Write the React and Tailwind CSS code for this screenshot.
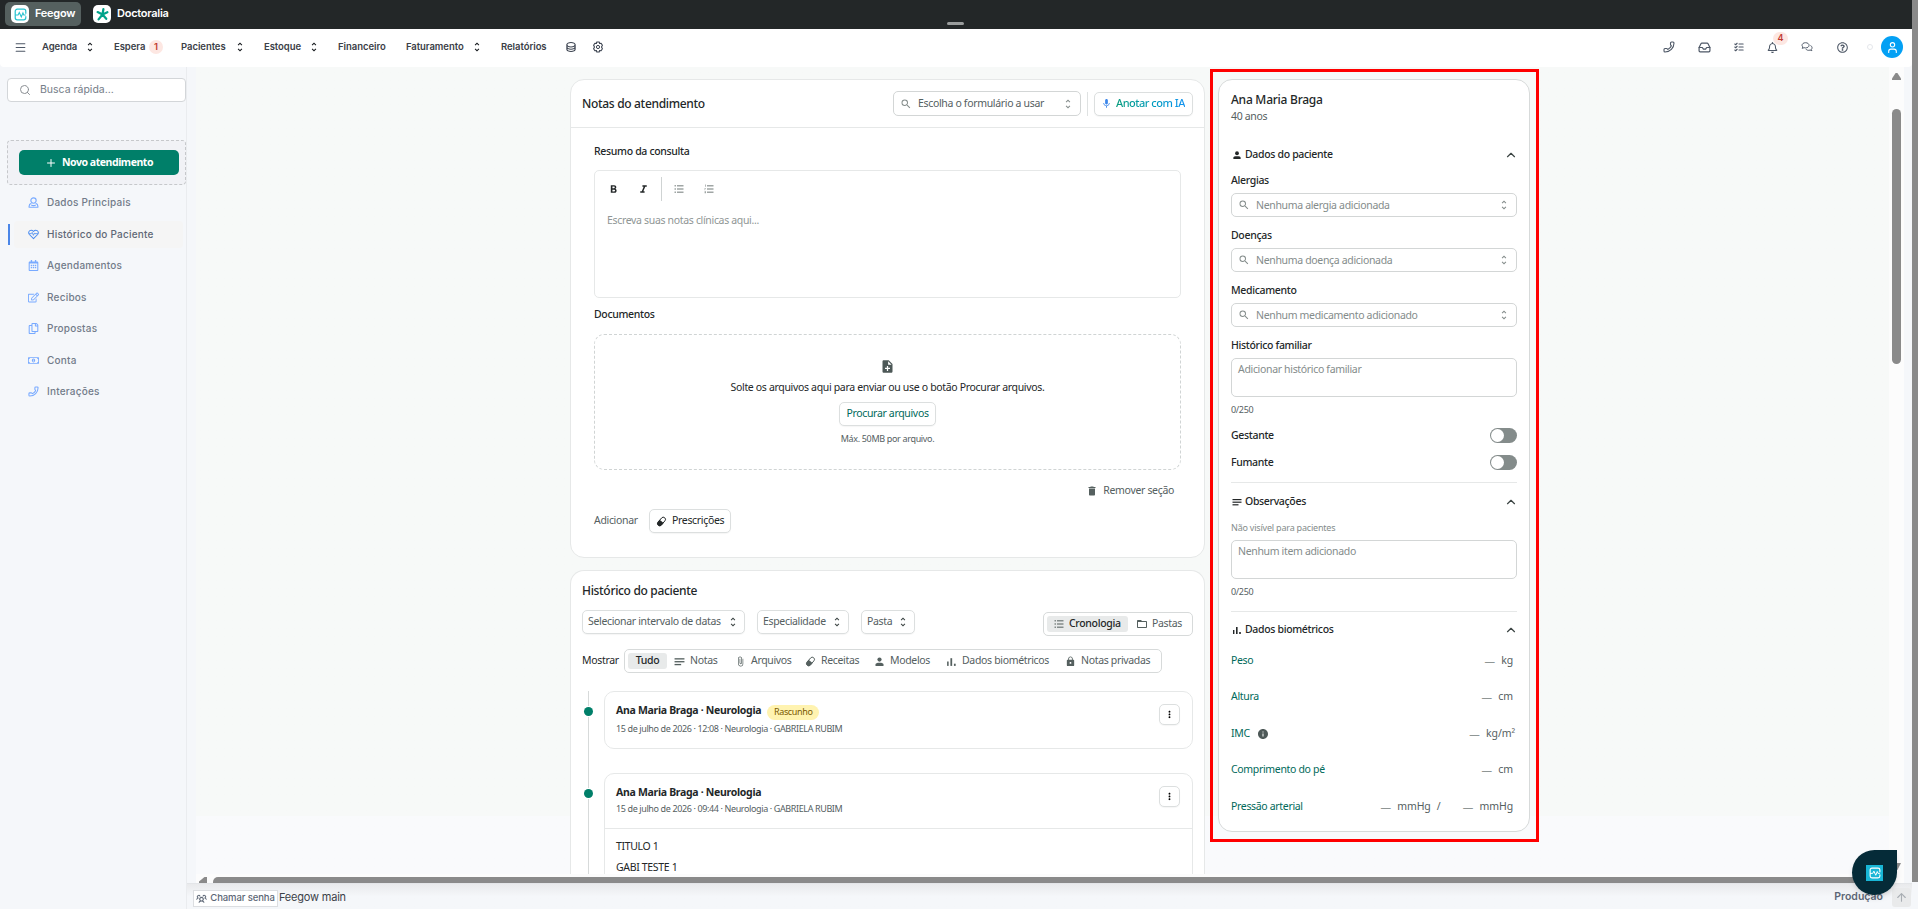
import React from "react";
import clsx from "clsx";
import {
  MdSearch,
  MdUnfoldMore,
  MdMic,
  MdFormatBold,
  MdFormatItalic,
  MdNoteAdd,
  MdDelete,
  MdAttachFile,
  MdLock,
  MdMoreVert,
  MdInfo,
  MdFolderOpen,
} from "react-icons/md";
import {
  FaRegCalendarAlt,
  FaRegEdit,
  FaRegCopy,
  FaRegMoneyBillAlt,
  FaRegBell,
  FaRegQuestionCircle,
} from "react-icons/fa";
import {
  PiDatabaseBold,
  PiListChecksBold,
  PiUsersThreeBold,
} from "react-icons/pi";
import { ChevronUp, Inbox, Menu, Phone, Plus, Search, User, ArrowUp } from "lucide-react";

const PersonIcon = ({ className }) => (
  <svg viewBox="0 0 11 11" className={className} fill="currentColor">
    <circle cx="5.5" cy="3.6" r="2.1" />
    <path d="M1.5 10V8.6C1.5 7.2 3 6.8 5.5 6.8S9.5 7.2 9.5 8.6V10z" />
  </svg>
);

const PillIcon = ({ className }) => (
  <svg viewBox="0 0 12 12" className={className}>
    <g transform="rotate(40 6 6)">
      <rect x="3.6" y="0.6" width="4.8" height="10.8" rx="2.4" fill="none" stroke="currentColor" strokeWidth="1" />
      <path d="M3.2 5.8h5.6v3a2.8 2.8 0 0 1-5.6 0z" fill="currentColor" />
    </g>
  </svg>
);

const BarsIcon = ({ className }) => (
  <svg viewBox="0 0 10 10" className={className} fill="currentColor">
    <rect x="1" y="5" width="1.4" height="4" />
    <rect x="4" y="2" width="1.6" height="7" />
    <rect x="7.2" y="7" width="1.6" height="2" />
  </svg>
);

const LinesIcon = ({ className }) => (
  <svg viewBox="0 0 10 10" className={className} fill="currentColor">
    <rect x="0.5" y="2" width="9" height="1.2" />
    <rect x="0.5" y="4.6" width="9" height="1.2" />
    <rect x="0.5" y="7.2" width="6" height="1.2" />
  </svg>
);

const ListIcon = ({ className, numbered }) => (
  <svg viewBox="0 0 10 10" className={className} fill="currentColor">
    <path d="M3 1h6.5v1.6H3zM3 4.2h6.5v1.6H3zM3 7.4h6.5V9H3z" />
    {numbered ? (
      <path d="M1 .6h.8v2.2H1zM.6 4h1.2v.8H1.2v1.4H.6zM.6 7.2h1.4v2H.6z" />
    ) : (
      <path d="M.5 1H2v1.6H.5zM.5 4.2H2v1.6H.5zM.5 7.4H2V9H.5z" />
    )}
  </svg>
);

const CogIcon = ({ className }) => (
  <svg viewBox="0 0 12 12" className={className} fill="none" stroke="currentColor" strokeLinejoin="round">
    <path d="M4.8 1h2.4l.4 1.5 1.5-.3 1.3 2L9.5 6l.9 1.8-1.3 2-1.5-.3L7.2 11H4.8l-.4-1.5-1.5.3-1.3-2L2.500 6l-.9-1.800 1.300-2 1.500.3z" strokeWidth="1.100" />
    <circle cx="6" cy="6" r="1.600" />
  </svg>
);

const ChatsIcon = ({ className }) => (
  <svg viewBox="0 0 14 12" className={className} fill="none" stroke="currentColor" strokeWidth="1.100" strokeLinejoin="round">
    <path d="M5.300 1C7.700 1 9.400 2.300 9.400 4S7.700 7.100 5.300 7.100c-.6 0-1.200-.1-1.700-.3L1.400 7.600l.8-1.700C1.500 5.400 1.200 4.700 1.200 4 1.200 2.300 2.900 1 5.300 1z" />
    <path d="M11 4.300c1.200.5 1.900 1.400 1.900 2.500 0 .8-.3 1.400-.9 1.900l.7 1.600-2.100-.7c-2 .7-4.200.1-5.100-1.400" />
  </svg>
);

const UserIcon = ({ className }) => (
  <svg viewBox="0 0 12 12" className={className} fill="none" stroke="currentColor" strokeWidth="1.200" strokeLinejoin="round">
    <circle cx="6" cy="3.900" r="2.900" />
    <path d="M3.700 6.800C2.100 7.400 1.200 8.600 1.200 10v1.100h9.600V10c0-1.400-.9-2.600-2.500-3.200M3.500 8.800c1.500.8 3.500.8 5 0" />
  </svg>
);

const HeartIcon = ({ className }) => (
  <svg viewBox="0 0 12 11" className={className} fill="none" stroke="currentColor" strokeWidth="1.100" strokeLinejoin="round">
    <path d="M6 10L1.500 5.500C.3 4 .6 2.200 2 1.300 3.300.6 4.900.9 6 2.200 7.100.9 8.700.6 10 1.300c1.400.9 1.700 2.700.5 4.200z" />
    <path d="M1.200 4.600h2.400l1-1.400 1.300 3.200 1.200-2.600.5.8h3.200" strokeWidth="0.900" />
  </svg>
);

const FeegowMark = ({ className }) => (
  <svg viewBox="0 0 16 16" className={className} fill="none" stroke="currentColor">
    <path d="M7 14.5H4A2.5 2.5 0 0 1 1.5 12V4A2.5 2.5 0 0 1 4 1.500h8A2.500 2.500 0 0 1 14.500 4v3M14.500 10v2a2.500 2.500 0 0 1-2.500 2.500H7" strokeWidth="1.500" />
    <path d="M1.500 8.500H5l1.500-3 2.500 5.500 2-5 1 2.500h2.500" strokeWidth="1.300" />
  </svg>
);

const DoctoraliaMark = ({ className }) => (
  <svg viewBox="0 0 16 16" className={className} fill="none" stroke="#00a28a" strokeWidth="2.4" strokeLinecap="round">
    <path d="M9 2.200L8 8M2.800 5.400L8 8M8 8l-4.200 5.200M8 8l4 4.600M8 8l5.200-2.400" />
  </svg>
);

const UpDown = ({ className }) => (
  <MdUnfoldMore className={clsx("size-3 shrink-0", className)} />
);

const NavItem = ({ label, className, sort }) => (
  <div className={clsx("flex items-center justify-between", className)}>
    <span>{label}</span>
    {sort && <UpDown className="text-[#15181c]" />}
  </div>
);

const TopBar = () => (
  <div className="h-[29px] bg-[#232728] flex items-center text-white text-[11px] font-semibold tracking-[-0.25px]">
    <div className="ml-[5px] mb-px h-6 w-[76px] rounded-[5px] bg-[#55605f] flex items-center pl-[6px]">
      <span className="size-[18px] rounded-[5px] bg-white flex items-center justify-center">
        <FeegowMark className="size-[13px] text-[#27c3cf]" />
      </span>
      <span className="ml-[6px] mb-px">Feegow</span>
    </div>
    <span className="ml-[12px] mb-px size-[18px] rounded-[5px] bg-white flex items-center justify-center">
      <DoctoraliaMark className="size-[15px]" />
    </span>
    <span className="ml-[6px] mb-[2px]">Doctoralia</span>
  </div>
);

const Header = () => (
  <div className="h-[38px] bg-white rounded-b-[4px] pb-[2px] flex items-center text-[9.5px] font-semibold tracking-[-0.05px] text-[#3b4047]">
    <Menu className="ml-[14px] size-[13px] text-[#4d5766]" />
    <NavItem label="Agenda" sort className="ml-[15px] w-[54px]" />
    <div className="ml-[18px] w-[32px]">Espera</div>
    <span className="ml-[3px] size-[14px] rounded-full bg-[#fde7e2] text-[#c0392f] flex items-center justify-center">
      1
    </span>
    <NavItem label="Pacientes" sort className="ml-[18px] w-[65px]" />
    <NavItem label="Estoque" sort className="ml-[18px] w-[56px]" />
    <div className="ml-[18px] w-[68px]">Financeiro</div>
    <NavItem label="Faturamento" sort className="w-[77px]" />
    <div className="ml-[18px] w-[64px]">Relatórios</div>
    <PiDatabaseBold className="size-3 text-[#3d4451]" />
    <CogIcon className="ml-[15px] size-3 text-[#3d4451]" />
    <div className="ml-auto mr-[9px] flex items-center text-[#4d5766]">
      <Phone className="size-3 -scale-x-100" strokeWidth={2.200} />
      <Inbox className="ml-[23px] size-[13px]" strokeWidth={2.200} />
      <PiListChecksBold className="ml-[22px] size-3" />
      <div className="relative ml-[22px]">
        <FaRegBell className="size-[11px]" />
        <span className="absolute -top-[10px] left-[6px] h-[13px] w-[15px] rounded-full bg-[#fde7e2] text-[9px] text-[#c0392f] flex items-center justify-center">
          4
        </span>
      </div>
      <ChatsIcon className="ml-[23px] size-3" />
      <FaRegQuestionCircle className="ml-[24px] size-[11px]" />
      <span className="ml-[19px] size-[6px] rounded-full border border-gray-200" />
      <span className="ml-[8px] size-[22px] rounded-full bg-[#03a0f4] text-white flex items-center justify-center">
        <User className="size-[13px]" />
      </span>
    </div>
  </div>
);

const PhoneIcon = ({ className }) => <Phone className={clsx("-scale-x-100", className)} strokeWidth={2.300} />;

const MENU = [
  { label: "Dados Principais", icon: UserIcon },
  { label: "Histórico do Paciente", icon: HeartIcon, active: true },
  { label: "Agendamentos", icon: FaRegCalendarAlt },
  { label: "Recibos", icon: FaRegEdit },
  { label: "Propostas", icon: FaRegCopy },
  { label: "Conta", icon: FaRegMoneyBillAlt },
  { label: "Interações", icon: PhoneIcon },
];

const Sidebar = () => (
  <div className="w-[187px] shrink-0 border-r border-[#eaecef] bg-[#f5f7fa]">
    <div className="ml-[7px] mt-[11px] h-6 w-[179px] rounded-[4px] border border-[#d3d6d9] bg-white flex items-center text-[10.5px] text-[#757d88]">
      <Search className="ml-[11px] size-3 text-[#8b8f94]" strokeWidth={2} />
      <span className="ml-[9px] mb-px">Busca rápida...</span>
    </div>
    <div className="ml-[7px] mt-[38px] h-[45px] w-[179px] rounded-[4px] border border-dashed border-[#c6c8cb] bg-[#f1f2f6] pl-[11px] pt-[9px]">
      <button className="h-[25px] w-[160px] rounded-[5px] bg-[#007f69] flex items-center justify-center text-white font-['Noto_Sans'] text-[10.5px] font-bold tracking-[-0.45px]">
        <Plus className="mr-[5px] size-3" />
        Novo atendimento
      </button>
    </div>
    <div className="mt-[2px]">
      {MENU.map(({ label, icon: Icon, active }) => (
        <div key={label} className="h-[31.5px] flex items-center text-[10px] tracking-[0.22px] font-medium text-[#727b89]">
          <span className={clsx("ml-[8px] h-[21px] w-[2px]", active && "bg-[#4a86e8]")} />
          <div className={clsx("ml-1 h-[27px] w-[169px] rounded-[4px] flex items-center", active && "bg-[#f5f5f5] text-[#5f6875]")}>
            <span className="ml-[13px] w-[12px] flex justify-center">
              <Icon className={clsx("size-[11px] shrink-0", active ? "text-[#4a8cf0]" : "text-[#78aaff]")} />
            </span>
            <span className="ml-[8px]">{label}</span>
          </div>
        </div>
      ))}
    </div>
  </div>
);

const OutlineButton = ({ className, children }) => (
  <button className={clsx("h-6 shrink-0 rounded-[5px] border border-[#dcdfdf] bg-white shadow-[0_1px_1px_rgba(0,0,0,0.04)] flex items-center", className)}>
    {children}
  </button>
);

const NotesCard = () => (
  <div className="h-[479px] w-[635px] rounded-[14px] border border-[#e6e8e8] bg-white">
    <div className="h-[48px] border-b border-[#e6e8e8] flex items-center pl-[11px] pr-[11px]">
      <h2 className="text-[12px] font-medium tracking-[-0.32px] text-[#232728]">Notas do atendimento</h2>
      <div className="ml-auto h-[25px] w-[188px] rounded-[5px] border border-[#d3d6d6] flex items-center text-[#55605f]">
        <MdSearch className="ml-[6px] size-3 text-[#848c8b]" />
        <span className="ml-[6px]">Escolha o formulário a usar</span>
        <UpDown className="ml-auto mr-[6px] text-[#848c8b]" />
      </div>
      <span className="ml-[6px] h-6 w-px bg-[#dfe2e2]" />
      <OutlineButton className="ml-[6px] w-[99px] pl-[6px]">
        <MdMic className="size-[11px] text-[#3b86ea]" />
        <span className="ml-[4px] bg-linear-to-r from-[#0b9c7d] to-[#1493f0] bg-clip-text text-[11px] font-medium tracking-[-0.5px] text-transparent">
          Anotar com IA
        </span>
      </OutlineButton>
    </div>

    <div className="px-[23px] pt-[15px] text-[#232728]">
      <div className="h-4 font-medium leading-4">Resumo da consulta</div>
      <div className="mt-[11px] h-[128px] w-[587px] rounded-[5px] border border-[#e6e8e8]">
        <div className="mt-[6px] h-6 flex items-center">
          <MdFormatBold className="ml-[12px] size-[13px]" />
          <MdFormatItalic className="ml-[17px] size-[13px]" />
          <span className="ml-[11px] h-6 w-px bg-[#cfd3d3]" />
          <ListIcon className="ml-[12px] size-[10px] text-[#a0a6a5]" />
          <ListIcon className="ml-[20px] size-[10px] text-[#a0a6a5]" numbered />
        </div>
        <div className="ml-[12px] mt-[11px] leading-4 text-[#8f9695]">Escreva suas notas clínicas aqui...</div>
      </div>
      <div className="mt-[8px] h-4 font-medium leading-4">Documentos</div>
      <div className="mt-[12px] h-[136px] w-[587px] rounded-[10px] border border-dashed border-[#d0d4d4] flex flex-col items-center">
        <MdNoteAdd className="mt-[24px] size-[15px] text-[#4d5857]" />
        <span className="mt-[5px] leading-4">Solte os arquivos aqui para enviar ou use o botão Procurar arquivos.</span>
        <OutlineButton className="mt-[7px] w-[97px] justify-center text-[#00695a]">Procurar arquivos</OutlineButton>
        <span className="mt-[5px] text-[9px] leading-4 text-[#55605f]">Máx. 50MB por arquivo.</span>
      </div>
      <div className="mt-[13px] h-4 pr-[7px] flex items-center justify-end text-[#55605f]">
        <MdDelete className="size-[12px]" />
        <span className="ml-[5px]">Remover seção</span>
      </div>
      <div className="mt-[10px] flex items-center">
        <span className="w-[55px] text-[#55605f]">Adicionar</span>
        <OutlineButton className="w-[82px] pl-[6px]">
          <PillIcon className="size-[11px]" />
          <span className="ml-[5px]">Prescrições</span>
        </OutlineButton>
      </div>
    </div>
  </div>
);

const FILTERS = [
  { label: "Notas", icon: LinesIcon, width: "w-[61px]" },
  { label: "Arquivos", icon: MdAttachFile, width: "w-[70px]" },
  { label: "Receitas", icon: PillIcon, width: "w-[69px]" },
  { label: "Modelos", icon: PersonIcon, width: "w-[72px]" },
  { label: "Dados biométricos", icon: BarsIcon, width: "w-[119px]" },
  { label: "Notas privadas", icon: MdLock, width: "w-[90px]" },
];

const Dropdown = ({ label, className }) => (
  <OutlineButton className={clsx("justify-between pl-[5px] pr-[5px] text-[#55605f]", className)}>
    {label}
    <UpDown className="text-[#3b4443]" />
  </OutlineButton>
);

const Entry = ({ date, draft, className, children }) => (
  <div className={clsx("flex", className)}>
    <div className="ml-[12px] w-[10px] shrink-0 flex flex-col items-center">
      <span className="h-[15px] w-px bg-[#d7dada]" />
      <span className="my-px size-[9px] rounded-full bg-[#007f69]" />
      <span className="w-px flex-1 bg-[#d7dada]" />
    </div>
    <div className={clsx("ml-[11px] w-[589px] border border-[#e6e8e8]", draft ? "h-[58px] rounded-[10px]" : "rounded-t-[10px]")}>
      <div className="h-[54px] pl-[11px] pr-[12px] flex">
        <div className="pt-[11px]">
          <div className="h-4 flex items-center">
            <span className="font-bold tracking-[-0.3px] text-[#232728]">Ana Maria Braga · Neurologia</span>
            {draft && (
              <span className="ml-[6px] mt-[2px] h-[15px] w-[52px] rounded-full bg-[#fff3b0] flex items-center justify-center text-[9px] text-[#7a5a00]">
                Rascunho
              </span>
            )}
          </div>
          <div className={clsx("text-[9px] leading-4 tracking-[-0.38px] text-[#55605f]", draft && "mt-[2px]")}>
            15 de julho de 2026 · {date} · Neurologia · GABRIELA RUBIM
          </div>
        </div>
        <OutlineButton className="ml-auto mt-[12px] h-[21px]! w-[21px] justify-center">
          <MdMoreVert className="size-[11px]" />
        </OutlineButton>
      </div>
      {children}
    </div>
  </div>
);

const HistoryCard = () => (
  <div className="mt-[12px] h-[304px] w-[635px] overflow-hidden rounded-t-[14px] border border-b-0 border-[#e6e8e8] bg-white">
    <h2 className="ml-[11px] mt-[12px] h-4 text-[12px] font-medium leading-4 tracking-[-0.32px] text-[#232728]">Histórico do paciente</h2>
    <div className="ml-[11px] mr-[11px] mt-[11px] h-[26px] flex">
      <Dropdown label="Selecionar intervalo de datas" className="w-[163px]" />
      <Dropdown label="Especialidade" className="ml-[12px] w-[92px]" />
      <Dropdown label="Pasta" className="ml-[12px] w-[54px]" />
      <div className="ml-auto mt-[2px] h-6 w-[150px] rounded-[5px] border border-[#d7dada] flex items-center pl-[3px] text-[#55605f]">
        <div className="h-4 w-[81px] rounded-[3px] bg-[#e8eaea] flex items-center pl-[7px] text-[#232728]">
          <ListIcon className="size-[10px] text-[#848c8b]" />
          <span className="ml-[5px] font-medium">Cronologia</span>
        </div>
        <MdFolderOpen className="ml-[8px] size-[12px]" />
        <span className="ml-[4px]">Pastas</span>
      </div>
    </div>
    <div className="ml-[11px] mt-[13px] h-6 flex items-center">
      <span className="w-[42px] text-[#232728]">Mostrar</span>
      <div className="h-6 w-[538px] rounded-[5px] border border-[#d7dada] flex items-center text-[#55605f]">
        <span className="ml-[3px] mr-[7px] h-4 w-[39px] rounded-[3px] bg-[#e8eaea] flex items-center justify-center font-medium text-[#232728]">Tudo</span>
        {FILTERS.map(({ label, icon: Icon, width }) => (
          <div key={label} className={clsx("shrink-0 flex items-center whitespace-nowrap", width)}>
            <Icon className="mr-[5px] size-[11px] shrink-0" />
            {label}
          </div>
        ))}
      </div>
    </div>
    <Entry date="12:08" draft className="mt-[18px] h-[82px]" />
    <Entry date="09:44" className="h-[110px]">
      <div className="border-t border-[#e6e8e8] pl-[11px] pt-[9px] text-[#232728]">
        <div className="h-4 leading-4">TITULO 1</div>
        <div className="mt-[5px] h-4 leading-4">GABI TESTE 1</div>
      </div>
    </Entry>
  </div>
);

const SectionTitle = ({ icon: Icon, children, className }) => (
  <div className={clsx("h-6 flex items-center text-[10.5px] font-medium text-[#232728]", className)}>
    <span className="w-[14px] pl-px">
      <Icon className="size-[10px]" />
    </span>
    {children}
    <ChevronUp className="ml-auto -mr-px size-[14px] text-[#3b4443]" strokeWidth={2} />
  </div>
);

const SearchField = ({ label, placeholder, className }) => (
  <div className={className}>
    <div className="h-[17px] font-medium leading-[17px] text-[#232728]">{label}</div>
    <div className="mt-[4px] h-6 rounded-[5px] border border-[#d3d6d6] flex items-center text-[#848c8b]">
      <MdSearch className="ml-[6px] size-3" />
      <span className="ml-[6px] mt-px">{placeholder}</span>
      <UpDown className="ml-auto mr-[6px]" />
    </div>
  </div>
);

const TextArea = ({ children, className }) => (
  <div className={clsx("h-[39px] rounded-[5px] border border-[#d3d6d6] pl-[6px] pt-[2px] leading-4 text-[#848c8b]", className)}>
    {children}
  </div>
);

const Toggle = ({ label, className }) => (
  <div className={clsx("h-[17px] flex items-center justify-between font-medium text-[#232728]", className)}>
    {label}
    <span className="h-[15px] w-[27px] rounded-full bg-[#848c8b] p-px">
      <span className="block size-[13px] rounded-full bg-white" />
    </span>
  </div>
);

const Dash = () => <span className="mr-[6px] mt-[2px] w-[11px] text-center text-[#8f9695] tracking-normal">—</span>;

const Metric = ({ label, unit, info }) => (
  <div className="h-[36.5px] pt-px flex items-center text-[#00695a]">
    {label}
    {info && <MdInfo className="ml-[7px] mt-px size-3 text-[#4d5857]" />}
    <div className={clsx("ml-auto flex items-center tracking-[-0.1px] text-[#55605f]", info ? "mr-[2px]" : "mr-[4px]")}>
      {label === "Pressão arterial" && (
        <>
          <Dash />
          <span className="mr-[6px]">mmHg</span>
          <span className="mr-[22px]">/</span>
        </>
      )}
      <Dash />
      {unit}
    </div>
  </div>
);

const PatientPanel = () => (
  <div className="ml-[5px] mt-[2px] h-[773px] w-[329px] border-3 border-[#ff0000] pl-[5px] pt-[7px]">
    <div className="h-[753px] w-[312px] rounded-[14px] border border-[#d7dada] bg-white px-[12px] pt-[12px]">
      <div className="h-4 text-[12px] font-medium leading-4 tracking-[-0.25px] text-[#232728]">Ana Maria Braga</div>
      <div className="h-[17px] leading-[17px] text-[#55605f]">40 anos</div>
      <SectionTitle icon={PersonIcon} className="mt-[18px]">Dados do paciente</SectionTitle>
      <SearchField label="Alergias" placeholder="Nenhuma alergia adicionada" className="mt-[5px]" />
      <SearchField label="Doenças" placeholder="Nenhuma doença adicionada" className="mt-[10px]" />
      <SearchField label="Medicamento" placeholder="Nenhum medicamento adicionado" className="mt-[10px]" />
      <div className="mt-[10px] h-[17px] font-medium leading-[17px] text-[#232728]">Histórico familiar</div>
      <TextArea className="mt-[4px]">Adicionar histórico familiar</TextArea>
      <div className="mt-[5px] h-4 text-[9px] leading-4 text-[#55605f]">0/250</div>
      <Toggle label="Gestante" className="mt-[9px]" />
      <Toggle label="Fumante" className="mt-[10px]" />
      <div className="mt-[11px] h-px bg-[#e6e8e8]" />
      <SectionTitle icon={LinesIcon} className="mt-[7px]">Observações</SectionTitle>
      <div className="mt-[6px] h-4 text-[9px] leading-4 tracking-[-0.2px] text-[#848c8b]">Não visível para pacientes</div>
      <TextArea className="mt-[4px]">Nenhum item adicionado</TextArea>
      <div className="mt-[5px] h-4 text-[9px] leading-4 text-[#55605f]">0/250</div>
      <div className="mt-[11px] h-px bg-[#e6e8e8]" />
      <SectionTitle icon={BarsIcon} className="mt-[6px]">Dados biométricos</SectionTitle>
      <Metric label="Peso" unit="kg" />
      <Metric label="Altura" unit="cm" />
      <Metric label="IMC" unit="kg/m²" info />
      <Metric label="Comprimento do pé" unit="cm" />
      <Metric label="Pressão arterial" unit="mmHg" />
    </div>
  </div>
);

const Footer = () => (
  <div className="h-[26px] w-full flex">
    <div className="w-[187px] border-r border-[#eaecef] bg-[#f5f7fa]" />
    <div className="flex-1 border-t border-[#e3e5e8] bg-linear-to-b from-[#e9eaec] to-[#f5f7fa] to-50% flex items-start text-[#5c6675]">
      <div className="ml-[6px] mt-[6px] h-[17px] w-[85px] border border-[#dcdee1] bg-white flex items-center justify-center text-[9.5px] font-medium tracking-[-0.1px]">
        <PiUsersThreeBold className="mr-[3px] size-[11px]" />
        Chamar senha
      </div>
      <span className="ml-[1px] mt-[5px] text-[11px] leading-4 tracking-[-0.2px] text-[#3b4148]">Feegow main</span>
      <span className="ml-auto mr-[9px] mt-[5px] text-[10.5px] font-semibold leading-4">Produção</span>
      <span className="mt-[4px] mr-px size-[19px] rounded-[3px] bg-[#e9eaeb] flex items-center justify-center text-[#a8adb3]">
        <ArrowUp className="size-[13px]" />
      </span>
    </div>
  </div>
);

export default function App() {
  return (
    <div className="relative h-[909px] w-[1918px] overflow-hidden bg-[#f5f7fa] flex font-[Inter,sans-serif]">
      <div className="w-[1912px] flex flex-col">
        <TopBar />
        <Header />
        <div className="h-[816px] flex">
          <Sidebar />
          <div className="ml-[9px] w-[1693px] flex flex-col">
            <div className="h-[807px] overflow-hidden bg-linear-to-b from-[#f7f9f8] from-[749px] to-[#f9fafc] to-[749px] pl-[374px] flex items-start font-['Noto_Sans',sans-serif] text-[10.5px] tracking-[-0.33px]">
              <div className="pt-[12px]">
                <NotesCard />
                <HistoryCard />
              </div>
              <PatientPanel />
            </div>
            <div className="h-[9px] bg-[#fcfcfc] flex items-end overflow-hidden">
              <svg viewBox="0 0 8 6" className="ml-[3px] h-[6px] w-2 fill-[#8a8a8a]">
                <path d="M8 0v6H0V4.500L5.500 0z" />
              </svg>
              <span className="ml-[6px] h-[6px] flex-1 rounded-tl-[5px] bg-[#8a8a8a]" />
            </div>
          </div>
          <div className="w-[15px] bg-[#fcfcfc] flex flex-col items-center">
            <svg viewBox="0 0 9 7" className="mt-[6px] h-[7px] w-[9px] fill-[#8a8a8a]">
              <path d="M3.600 0h1.800L9 5.500V7H0V5.500z" />
            </svg>
            <span className="mt-[29px] h-[255px] w-[9px] rounded-full bg-[#8a8a8a]" />
            <svg viewBox="0 0 9 7" className="mt-auto mb-[13px] h-[7px] w-[9px] fill-[#8a8a8a]">
              <path d="M0 0h9L5.400 7H3.600z" />
            </svg>
          </div>
        </div>
        <Footer />
      </div>
      <div className="h-[882px] flex-1 bg-[#8a8a8a]" />

      <span className="absolute left-[947px] top-[22px] h-[3px] w-[17px] rounded-full bg-[#9a9d9d]" />
      <div className="absolute left-[1852px] top-[850px] size-[45px] rounded-full rounded-tr-[5px] bg-[#052b38] shadow-md flex items-center justify-center">
        <span className="h-4 w-[17px] bg-[#18b6d6] text-white flex items-center justify-center">
          <FeegowMark className="size-3" />
        </span>
      </div>
    </div>
  );
}
